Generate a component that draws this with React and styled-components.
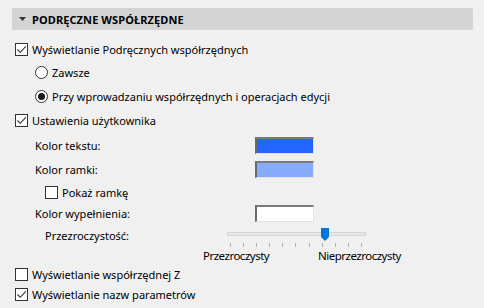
import React from "react";
import styled, { createGlobalStyle } from "styled-components";

const Global = createGlobalStyle`
  html, body { margin: 0; padding: 0; background: #f0f0f0; }
  body { font-family: "Noto Sans", "Open Sans", sans-serif; font-size: 11px; color: #000; }
`;

const Panel = styled.div`
  width: 484px;
  height: 308px;
  overflow: hidden;
  padding-top: 8px;
  box-sizing: border-box;
`;

const Header = styled.div`
  margin: 0 11px 0 12px;
  height: 22px;
  background: #d4d4d4;
  border-radius: 2px;
  display: flex;
  align-items: center;
  padding-left: 7px;
  gap: 6px;
`;

const Title = styled.span`
  font-weight: 700;
  font-size: 11px;
  letter-spacing: 0.1px;
`;

const List = styled.div`
  margin-top: 7px;
  display: flex;
  flex-direction: column;
`;

const Row = styled.div`
  height: ${(p) => p.$h}px;
  display: flex;
  align-items: center;
  padding-left: ${(p) => p.$indent}px;
  gap: 4px;
  white-space: nowrap;
`;

const Box = styled.span`
  width: 13px;
  height: 13px;
  box-sizing: border-box;
  border: 1px solid #333;
  background: #fff;
  display: inline-flex;
  align-items: center;
  justify-content: center;
  flex: none;
`;

const Radio = styled.span`
  width: 13px;
  height: 13px;
  box-sizing: border-box;
  border: 1px solid #333;
  border-radius: 50%;
  background: #fff;
  display: inline-flex;
  align-items: center;
  justify-content: center;
  flex: none;
  &::after {
    content: "";
    width: 7px;
    height: 7px;
    border-radius: 50%;
    background: ${(p) => (p.$on ? "#1a1a1a" : "transparent")};
  }
`;

const FieldRow = styled.div`
  height: ${(p) => p.$h}px;
  display: grid;
  grid-template-columns: 220px 59px;
  align-items: center;
  padding-left: ${(p) => p.$indent}px;
`;

const Swatch = styled.span`
  width: 59px;
  height: 17px;
  box-sizing: border-box;
  border-top: 2px solid #7a7a7a;
  border-left: 2px solid #6a6a6a;
  border-right: 1px solid #e3e3e3;
  border-bottom: 1px solid #e3e3e3;
  background: ${(p) => p.$color};
`;

const SliderRow = styled.div`
  height: ${(p) => p.$h}px;
  display: grid;
  grid-template-columns: 182px 139px;
  padding-left: 45px;
  align-items: start;
`;

const SliderLabel = styled.span`
  margin-top: 4px;
`;

const Slider = styled.div`
  position: relative;
  height: 22px;
`;

const Track = styled.div`
  position: absolute;
  left: 0;
  right: 0;
  top: 8px;
  height: 4px;
  box-sizing: border-box;
  background: #e7e7e7;
  border: 1px solid #d6d6d6;
`;

const Ticks = styled.div`
  position: absolute;
  left: 3px;
  top: 19px;
  width: 132px;
  display: flex;
  justify-content: space-between;
`;

const Tick = styled.span`
  width: 1px;
  height: 4px;
  background: #b0b0b0;
`;

const Thumb = styled.svg`
  position: absolute;
  left: 94px;
  top: 4px;
`;

const ScaleRow = styled.div`
  height: ${(p) => p.$h}px;
  display: grid;
  grid-template-columns: 115px auto;
  padding-left: 203px;
  align-items: center;
  font-size: 11.5px;
  letter-spacing: -0.5px;
`;

const Check = () => (
  <svg width="11" height="11" viewBox="0 0 11 11">
    <path d="M1.5 5.5 L4.3 8.3 L9.8 2.3" fill="none" stroke="#333" strokeWidth="1.1" />
  </svg>
);

const CheckRow = ({ h, indent, on, children }) => (
  <Row $h={h} $indent={indent}>
    <Box>{on && <Check />}</Box>
    <span>{children}</span>
  </Row>
);

const RadioRow = ({ h, indent, on, children }) => (
  <Row $h={h} $indent={indent}>
    <Radio $on={on} />
    <span>{children}</span>
  </Row>
);

export default function App() {
  return (
    <>
      <Global />
      <Panel>
        <Header>
          <svg width="7" height="4" viewBox="0 0 7 4">
            <path d="M0 0 H7 L3.5 4 Z" fill="#333" />
          </svg>
          <Title>PODRĘCZNE WSPÓŁRZĘDNE</Title>
        </Header>
        <List>
          <CheckRow h={24} indent={15} on>Wyświetlanie Podręcznych współrzędnych</CheckRow>
          <RadioRow h={23} indent={35}>Zawsze</RadioRow>
          <RadioRow h={24} indent={35} on>Przy wprowadzaniu współrzędnych i operacjach edycji</RadioRow>
          <CheckRow h={25} indent={15} on>Ustawienia użytkownika</CheckRow>
          <FieldRow $h={25} $indent={35}>
            <span>Kolor tekstu:</span>
            <Swatch $color="#2266ff" />
          </FieldRow>
          <FieldRow $h={23} $indent={35}>
            <span>Kolor ramki:</span>
            <Swatch $color="#88aaff" />
          </FieldRow>
          <CheckRow h={22} indent={45}>Pokaż ramkę</CheckRow>
          <FieldRow $h={21} $indent={35}>
            <span>Kolor wypełnienia:</span>
            <Swatch $color="#ffffff" />
          </FieldRow>
          <SliderRow $h={22}>
            <SliderLabel>Przezroczystość:</SliderLabel>
            <Slider>
              <Track />
              <Ticks>
                {Array.from({ length: 11 }).map((_, i) => (
                  <Tick key={i} />
                ))}
              </Ticks>
              <Thumb width="8" height="13" viewBox="0 0 8 13">
                <path d="M0 0 H8 V9 L4 13 L0 9 Z" fill="#0078d7" />
              </Thumb>
            </Slider>
          </SliderRow>
          <ScaleRow $h={19}>
            <span>Przezroczysty</span>
            <span>Nieprzezroczysty</span>
          </ScaleRow>
          <CheckRow h={19} indent={15}>Wyświetlanie współrzędnej Z</CheckRow>
          <CheckRow h={21} indent={15} on>Wyświetlanie nazw parametrów</CheckRow>
        </List>
      </Panel>
    </>
  );
}
